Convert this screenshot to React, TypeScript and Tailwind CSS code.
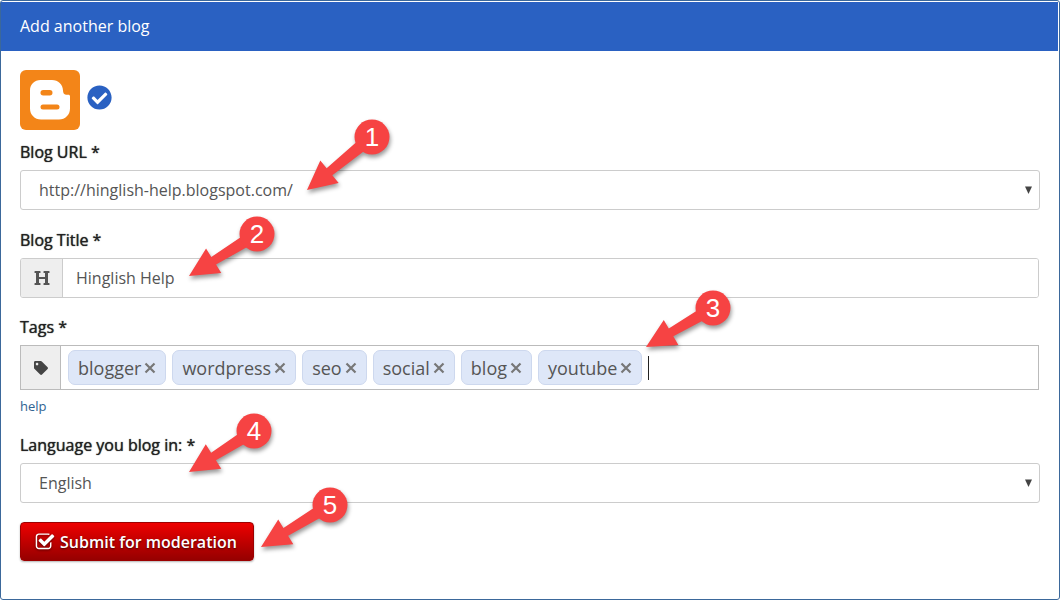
import React, { useState } from "react";
import { FaCheckCircle, FaHeading, FaTag } from "react-icons/fa";

const initialTags = ["blogger", "wordpress", "seo", "social", "blog", "youtube"];

const labelClass = "mb-1.5 block text-[#222] [text-shadow:0_0_1px_#222]";

function BloggerLogo() {
  return (
    <svg className="size-[60px]" viewBox="0 0 60 60" role="img" aria-label="Blogger">
      <rect width="60" height="60" rx="6" fill="#f38518" />
      <path
        fill="#fff"
        d="M20.500 10h11.500c6.200 0 10.800 4.600 11 10.500 0 2.300.9 4 3 4.300h2.300c1.200 0 1.700.6 1.700 1.700V38.500c0 6.300-4.700 11-11 11H21c-6.300 0-11-4.700-11-11V20.500C10 14.600 14.600 10 20.500 10Z"
      />
      <rect x="20.500" y="20" width="12" height="5.500" rx="2.700" fill="#f38518" />
      <rect x="20.500" y="34.500" width="19" height="5" rx="2.500" fill="#f38518" />
    </svg>
  );
}

function CheckSquareIcon() {
  return (
    <svg className="size-5 drop-shadow-[0_1px_1px_rgba(0,0,0,0.5)]" viewBox="0 0 1792 1792" fill="currentColor" aria-hidden="true">
      <path d="M1472 930v318q0 119-84.500 203.500t-203.500 84.500h-832q-119 0-203.500-84.500t-84.500-203.500v-832q0-119 84.500-203.500t203.500-84.500h832q63 0 117 25 15 7 18 23 3 17-9 29l-49 49q-10 10-23 10-3 0-9-2-23-6-45-6h-832q-66 0-113 47t-47 113v832q0 66 47 113t113 47h832q66 0 113-47t47-113v-254q0-13 9-22l64-64q10-10 23-10 6 0 12 3 20 8 20 29zm231-489l-814 814q-24 24-57 24t-57-24l-430-430q-24-24-24-57t24-57l110-110q24-24 57-24t57 24l263 263 647-647q24-24 57-24t57 24l110 110q24 24 24 57t-24 57z" />
    </svg>
  );
}

/* A numbered arrow: (x, y) is the tip, (dx, dy) leads from the tip to the centre of the badge. */
function Callout({ n, x, y, dx, dy }: { n: number; x: number; y: number; dx: number; dy: number }) {
  const length = Math.hypot(dx, dy);
  const angle = (Math.atan2(dy, dx) * 180) / Math.PI;
  return (
    <div className="pointer-events-none absolute" style={{ left: x, top: y }}>
      <svg
        className="absolute left-0 top-0 size-px overflow-visible drop-shadow-[1px_3px_2px_rgba(0,0,0,0.4)]"
        aria-hidden="true"
      >
        <path
          transform={`rotate(${angle})`}
          fill="#f64343"
          d={`M0 0L29 -14.500V-4.500L${length} -6.500V6.500L29 4.500V14.500Z`}
        />
        <circle cx={dx} cy={dy} r="17.500" fill="#f64343" />
      </svg>
      <span
        className="absolute flex size-9 -translate-x-1/2 -translate-y-1/2 items-center justify-center font-['Liberation_Sans',Arial,sans-serif] text-[26px] leading-none text-white"
        style={{ left: dx, top: dy }}
      >
        {n}
      </span>
    </div>
  );
}

function SelectField({ id, label, options }: { id: string; label: string; options: string[] }) {
  return (
    <div>
      <label htmlFor={id} className={labelClass}>
        {label}
      </label>
      <div className="relative">
        <select
          id={id}
          className="block h-10 w-full appearance-none rounded-[3px] border border-[#ccc] bg-white pl-[18px] pr-8 text-[#555] outline-none"
        >
          {options.map((o) => (
            <option key={o}>{o}</option>
          ))}
        </select>
        <svg className="pointer-events-none absolute right-2 top-4 h-2 w-[7px]" viewBox="0 0 7 8" aria-hidden="true">
          <path d="M0 0.500H7L3.500 8Z" fill="#444" />
        </svg>
      </div>
    </div>
  );
}

export default function App() {
  const [tags, setTags] = useState(initialTags);
  return (
    <main className="relative mr-0.5 rounded-[3px] border border-[#3b689b] bg-white font-['Open_Sans','Noto_Sans',sans-serif] text-base leading-6">
      <header className="mr-px mt-px bg-[#2a61c2] px-[19px] pb-[13px] pt-3">
        <h1 className="text-white">Add another blog</h1>
      </header>

      <form className="px-[19px] pb-[38px] pt-[19px]" onSubmit={(e) => e.preventDefault()}>
        <div className="mb-2.5 flex items-center gap-[7px]">
          <BloggerLogo />
          <FaCheckCircle className="mb-1.5 size-[25px] text-[#2a61c2]" />
        </div>

        <SelectField id="url" label="Blog URL *" options={["http://hinglish-help.blogspot.com/"]} />

        <div className="mr-px mt-[18px]">
          <label htmlFor="title" className={labelClass}>
            Blog Title *
          </label>
          <div className="flex h-10 overflow-hidden rounded-[3px] border border-[#ccc]">
            <span className="flex w-[42px] shrink-0 items-center justify-center border-r border-[#ccc] bg-[#eee] text-[#555]">
              <FaHeading className="size-4" />
            </span>
            <input
              id="title"
              className="min-w-0 flex-1 bg-white px-[13px] text-[#555] outline-none"
              defaultValue="Hinglish Help"
            />
          </div>
        </div>

        <div className="mr-px mt-[17px]">
          <label htmlFor="tags" className={labelClass}>
            Tags *
          </label>
          <div className="flex min-h-[45px] border border-[#bbb]">
            <span className="flex w-10 shrink-0 items-center justify-center border-r border-[#bbb] bg-[#eee] text-[#444]">
              <FaTag className="size-[14px]" />
            </span>
            <div className="flex min-w-0 flex-1 flex-wrap items-center gap-1.5 px-[7px] py-1">
              {tags.map((t) => (
                <span
                  key={t}
                  className="flex h-[35px] items-center gap-[3px] rounded-[7px] border border-[#cdd8ee] bg-[#dee7f8] px-[9px] text-lg leading-6 text-[#555]"
                >
                  {t}
                  <button type="button" aria-label={`Remove ${t}`} onClick={() => setTags(tags.filter((v) => v !== t))}>
                    <svg className="size-3" viewBox="0 0 12 12" aria-hidden="true">
                      <path d="M1.500 1.500L10.500 10.500M10.500 1.500L1.500 10.500" stroke="#777" strokeWidth="2.200" />
                    </svg>
                  </button>
                </span>
              ))}
              <span className="h-6 w-px bg-[#222]" aria-hidden="true" />
              <input id="tags" className="h-8 w-24 min-w-0 flex-1 text-lg outline-none" />
            </div>
          </div>
          <a href="#help" className="mt-1.5 block w-fit text-[13px] leading-5 text-[#2f6391]">
            help
          </a>
        </div>

        <div className="mt-[17px]">
          <SelectField id="language" label="Language you blog in: *" options={["English"]} />
        </div>

        <button
          type="submit"
          className="mt-[19px] flex h-[39px] items-center gap-[5px] rounded-[4px] border border-[#9c0000] bg-linear-to-b from-[#ee0000] to-[#960000] pl-3.5 pr-4 font-semibold text-white shadow-[0_1px_2px_rgba(0,0,0,0.3)] [text-shadow:0_1px_2px_rgba(0,0,0,0.6)]"
        >
          <CheckSquareIcon />
          Submit for moderation
        </button>
      </form>

      <Callout n={1} x={306} y={189} dx={65} dy={-53} />
      <Callout n={2} x={188} y={275} dx={68} dy={-42} />
      <Callout n={3} x={645} y={346} dx={67} dy={-39} />
      <Callout n={4} x={188} y={471} dx={65} dy={-41} />
      <Callout n={5} x={260} y={546} dx={69} dy={-42} />
    </main>
  );
}
